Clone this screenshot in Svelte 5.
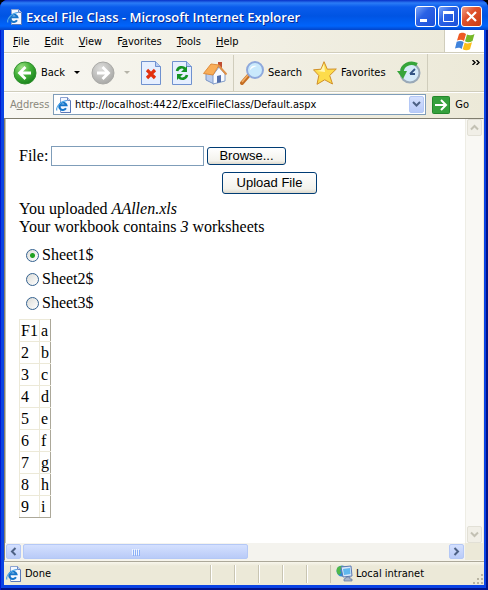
<script lang="ts">
	const menus = [
		{ pre: '', key: 'F', post: 'ile' },
		{ pre: '', key: 'E', post: 'dit' },
		{ pre: '', key: 'V', post: 'iew' },
		{ pre: 'F', key: 'a', post: 'vorites' },
		{ pre: '', key: 'T', post: 'ools' },
		{ pre: '', key: 'H', post: 'elp' }
	];

	const sheets = ['Sheet1$', 'Sheet2$', 'Sheet3$'];

	const rows = [
		['F1', 'a'],
		['2', 'b'],
		['3', 'c'],
		['4', 'd'],
		['5', 'e'],
		['6', 'f'],
		['7', 'g'],
		['8', 'h'],
		['9', 'i']
	];

	let selected = $state('Sheet1$');
	let address = $state('http://localhost:4422/ExcelFileClass/Default.aspx');
	let fileName = $state('');
</script>

{#snippet pageIcon()}
	<svg class="page-icon" width="16" height="16" viewBox="0 0 16 16" aria-hidden="true">
		<path d="M4.5 .5h7l3 3v12h-10z" fill="#f4f7ff" stroke="#8ba3d2" />
		<path d="M11.5 .5v3h3" fill="#c5d3ef" stroke="#6d87c0" />
		<path d="M14.5 4v11.500H5" fill="none" stroke="#5a78b8" />
		<path d="M10 11.300a3.700 3.700 0 1 1 .5-3H4" fill="none" stroke="#1674c9" stroke-width="2" />
		<path d="M1 13.500C-1 10 6 3.500 11 3.500" fill="none" stroke="#51a7e8" stroke-width="1.200" />
	</svg>
{/snippet}

{#snippet chevron(d: string)}
	<svg width="9" height="9" viewBox="0 0 9 9" aria-hidden="true">
		<path {d} fill="none" stroke="currentColor" stroke-width="2" />
	</svg>
{/snippet}

<div class="desktop">
	<div class="window">
		<header class="title-bar">
			{@render pageIcon()}
			<h1>Excel File Class - Microsoft Internet Explorer</h1>
			<div class="window-buttons">
				<button aria-label="Minimize">
					<svg width="19" height="19" viewBox="0 0 19 19"><path d="M4 12h7v3H4z" fill="#fff" /></svg>
				</button>
				<button aria-label="Maximize">
					<svg width="19" height="19" viewBox="0 0 19 19">
						<path d="M4.5 5v9.5h10V5" fill="none" stroke="#fff" />
						<path d="M4 4h11v3H4z" fill="#fff" />
					</svg>
				</button>
				<button class="close" aria-label="Close">
					<svg width="19" height="19" viewBox="0 0 19 19">
						<path d="M5 5l9 9M14 5l-9 9" stroke="#fff" stroke-width="2.2" />
					</svg>
				</button>
			</div>
		</header>

		<div class="menu-bar">
			<nav>
				{#each menus as item}
					<button>{item.pre}<u>{item.key}</u>{item.post}</button>
				{/each}
			</nav>
			<div class="flag">
				<svg width="20" height="19" viewBox="0 0 20 19" aria-hidden="true">
					<path d="M4 2c3-2 5-1 7 0L9 9C7 7.500 5 7.500 2 8.500z" fill="#ee5a24" />
					<path d="M12 2.500c2 1 5 1 7.500-.5l-2 7c-3 1.500-5 1.500-7.500.3z" fill="#76b82a" />
					<path d="M1.700 9.700c3-1 5-.8 7 .4l-2 7C5 15.500 3 15.500 0 16.500z" fill="#3f83dc" />
					<path d="M9.700 10.500c2 1.300 4.500 1.200 7.300-.2l-2 7c-2.500 1.300-5 1.200-7.300 0z" fill="#fbbe1a" />
				</svg>
			</div>
		</div>

		<div class="toolbar">
			<div class="tools">
				<button class="tool">
					<svg width="24" height="24" viewBox="0 0 24 24" aria-hidden="true">
						<defs>
							<radialGradient id="green-ball" cx=".35" cy=".25" r=".8">
								<stop offset="0" stop-color="#9be083" />
								<stop offset=".5" stop-color="#43b138" />
								<stop offset="1" stop-color="#17801b" />
							</radialGradient>
							<radialGradient id="gray-ball" cx=".4" cy=".3" r=".8">
								<stop offset="0" stop-color="#dededc" />
								<stop offset="1" stop-color="#a2a2a0" />
							</radialGradient>
						</defs>
						<circle cx="12" cy="12" r="11" fill="url(#green-ball)" stroke="#2f8f2d" />
						<path d="M12.500 6l-6 6 6 6M7 12h11" fill="none" stroke="#fff" stroke-width="2.800" />
					</svg>
					<span>Back</span>
					<i class="arrow"></i>
				</button>
				<button class="tool forward" aria-label="Forward">
					<svg width="24" height="24" viewBox="0 0 24 24" aria-hidden="true">
						<circle cx="12" cy="12" r="11" fill="url(#gray-ball)" stroke="#a9a9a6" />
						<path d="M11.500 6l6 6-6 6M17 12H6" fill="none" stroke="#fff" stroke-width="2.800" />
					</svg>
					<i class="arrow"></i>
				</button>
				<button class="tool" aria-label="Stop">
					<svg width="20" height="24" viewBox="0 0 20 24" aria-hidden="true">
						<path d="M.5 .5h14l5 5v18H.5z" fill="#e6efff" stroke="#6f91cf" />
						<path d="M14.500 .5v5h5" fill="#b9cdf2" stroke="#6f91cf" />
						<path d="M6 9l8 8M14 9l-8 8" stroke="#e2300f" stroke-width="3.200" />
					</svg>
				</button>
				<button class="tool" aria-label="Refresh">
					<svg width="20" height="24" viewBox="0 0 20 24" aria-hidden="true">
						<path d="M.5 .5h14l5 5v18H.5z" fill="#e6efff" stroke="#6f91cf" />
						<path d="M14.500 .5v5h5" fill="#b9cdf2" stroke="#6f91cf" />
						<path d="M5 10c1-4 6-5 8-2" fill="none" stroke="#159425" stroke-width="2.600" />
						<path d="M15 5v6H9z" fill="#159425" />
						<path d="M15 14c-1 4-6 5-8 2" fill="none" stroke="#159425" stroke-width="2.600" />
						<path d="M5 19v-6h6z" fill="#159425" />
					</svg>
				</button>
				<button class="tool" aria-label="Home">
					<svg width="24" height="24" viewBox="0 0 24 24" aria-hidden="true">
						<path d="M15 1h4v8h-4z" fill="#bf4f32" />
						<path d="M3 12l8 2v9l-8-4z" fill="#bacced" stroke="#7894c4" />
						<path d="M10 14l6-8 6 7v7l-12 3z" fill="#f8fbff" stroke="#829cc8" />
						<path d="M14 15l4-1v7l-4 1z" fill="#5571ad" />
						<path d="M.5 12.500L8 3l8 1-6 10z" fill="#f9ae58" stroke="#de8c3c" />
						<path d="M15.500 4.500l8 9" stroke="#e09248" stroke-width="2" />
					</svg>
				</button>
				<span class="divider"></span>
				<button class="tool">
					<svg width="24" height="24" viewBox="0 0 24 24" aria-hidden="true">
						<path d="M2 22l7-8" stroke="#c46e24" stroke-width="4" stroke-linecap="round" />
						<path d="M2 21l6-7" stroke="#f4af63" stroke-width="1.500" />
						<circle cx="15" cy="9" r="8" fill="#c9e9fc" stroke="#8fa9dc" stroke-width="2" />
						<path d="M10 9c0-4 4-5 7-4-3 1-5 2-7 4z" fill="#fff" />
					</svg>
					<span>Search</span>
				</button>
				<button class="tool">
					<svg width="24" height="24" viewBox="0 0 24 24" aria-hidden="true">
						<path
							d="M11 .7l3.300 7.500 9-.2-6.600 6.500 2.800 8.500-7.800-4.200L4 23.300l1.800-8.800L.5 8.800l7.500-.6z"
							fill="#fddc4b"
							stroke="#d08f28"
							stroke-linejoin="round"
						/>
						<path d="M11 3l1 8-8-1 4-1z" fill="#fff6b4" />
					</svg>
					<span>Favorites</span>
				</button>
				<button class="tool" aria-label="History">
					<svg width="24" height="24" viewBox="0 0 24 24" aria-hidden="true">
						<circle cx="13" cy="12" r="9.500" fill="#d5eaf8" stroke="#9aa9b8" stroke-width="2" />
						<path d="M13 13l5-5M13 13h5" stroke="#345584" stroke-width="1.800" />
						<path d="M20 3.500C13 0 5 4 5 11" fill="none" stroke="#36a53a" stroke-width="3.500" />
						<path d="M0 10h10l-4 8z" fill="#36a53a" />
					</svg>
				</button>
			</div>
			<button class="more" aria-label="More tools">
				<svg width="8" height="5" viewBox="0 0 8 5">
					<path d="M.5 0L3 2.500.500 5M4.500 0L7 2.500 4.500 5" fill="none" stroke="#000" stroke-width="1.400" />
				</svg>
			</button>
		</div>

		<div class="address-bar">
			<label for="address">A<u>d</u>dress</label>
			<div class="address-box">
				{@render pageIcon()}
				<input id="address" type="text" bind:value={address} />
				<button class="xp" aria-label="Show addresses">{@render chevron('M1 2l3.500 3.500L8 2')}</button>
			</div>
			<button class="go">
				<svg width="18" height="18" viewBox="0 0 18 18" aria-hidden="true">
					<rect x=".5" y=".5" width="17" height="17" rx="1" fill="#35a03c" stroke="#23862b" />
					<path d="M9 4l5 5-5 5M14 9H3" fill="none" stroke="#fff" stroke-width="2" />
				</svg>
				<span>Go</span>
			</button>
		</div>

		<div class="viewport">
			<main>
				<form onsubmit={(e) => e.preventDefault()}>
					<div class="file-row">
						<label for="file">File:</label>
						<input id="file" type="text" bind:value={fileName} />
						<button type="button">Browse...</button>
					</div>
					<button class="upload">Upload File</button>
					<p>You uploaded <em>AAllen.xls</em></p>
					<p>Your workbook contains <em>3</em> worksheets</p>
					<div class="sheets">
						{#each sheets as sheet}
							<label>
								<input type="radio" name="sheet" value={sheet} bind:group={selected} />
								{sheet}
							</label>
						{/each}
					</div>
				</form>
				<table>
					<tbody>
						{#each rows as row}
							<tr>
								{#each row as cell}
									<td>{cell}</td>
								{/each}
							</tr>
						{/each}
					</tbody>
				</table>
			</main>
			<div class="scroll-y">
				<button class="xp off" aria-label="Scroll up">{@render chevron('M1 6.500L4.500 3 8 6.500')}</button>
				<button class="xp off" aria-label="Scroll down">{@render chevron('M1 2.500L4.500 6 8 2.500')}</button>
			</div>
			<div class="scroll-x">
				<button class="xp" aria-label="Scroll left">{@render chevron('M6.500 1L3 4.500 6.500 8')}</button>
				<div class="track">
					<div class="xp thumb"><i></i><i></i><i></i><i></i></div>
				</div>
				<button class="xp" aria-label="Scroll right">{@render chevron('M2.500 1L6 4.500 2.500 8')}</button>
			</div>
			<div class="corner"></div>
		</div>

		<footer class="status-bar">
			<div class="status">
				{@render pageIcon()}
				<span>Done</span>
			</div>
			<span class="pane"></span>
			<span class="pane"></span>
			<span class="pane"></span>
			<span class="pane"></span>
			<span class="pane"></span>
			<div class="zone">
				<svg width="17" height="17" viewBox="0 0 17 17" aria-hidden="true">
					<circle cx="6" cy="6" r="5.500" fill="#2e8ad2" />
					<path d="M2 2c3-2 5-1 5 1L4 5l1 3-2 2C0 8 0 4 2 2z" fill="#4fb947" />
					<path d="M5 2l10-1 1 10-9 1z" fill="#d9e8fa" stroke="#5c79b2" />
					<path d="M7 4l7-1 .5 6-6.500 1z" fill="#61b7ee" />
					<path d="M10 12h4v2h2v2H8v-2l2-1z" fill="#a6b4cc" stroke="#62789e" stroke-width=".7" />
				</svg>
				<span>Local intranet</span>
			</div>
			<svg class="grip" width="12" height="12" viewBox="0 0 12 12" aria-hidden="true">
				<path d="M9 1h2v2H9zM5 5h2v2H5zM9 5h2v2H9zM1 9h2v2H1zM5 9h2v2H5zM9 9h2v2H9z" fill="#b8b4a2" />
			</svg>
		</footer>
	</div>
</div>

<style>
	:global(body) {
		margin: 0;
	}

	.desktop {
		--face: #ece9d8;
		--line: #d0cdbc;
		box-sizing: border-box;
		min-height: 100vh;
		display: flex;
		background: linear-gradient(#000 20px, #0831d9 20px);
		font: 11px/16px 'DejaVu Sans Condensed', Tahoma, sans-serif;
		color: #000;
	}

	.window {
		flex: 1;
		min-width: 0;
		display: flex;
		flex-direction: column;
		box-sizing: border-box;
		padding: 0 4px 5px 4px;
		border-radius: 8px 8px 0 0;
		background: #0a43e4;
		box-shadow: inset 1px 0 #0019cf, inset -2px -2px #00138c;
		overflow: hidden;
	}

	button {
		font: inherit;
		color: inherit;
		padding: 0;
		border: 0;
		background: none;
	}

	svg {
		display: block;
		flex: none;
	}

	.title-bar {
		display: flex;
		align-items: center;
		height: 30px;
		margin: 0 -4px;
		padding: 3px 6px 0 7px;
		box-sizing: border-box;
		background: linear-gradient(#0831c8 0, #2b7cf6 3px, #0a5cec 7px, #0054e3 16px, #0064fb 26px, #0344c8 30px);
	}
	.title-bar h1 {
		flex: 1;
		margin: 0 0 0 3px;
		font: 600 13px/18px 'Trebuchet MS', 'Open Sans', sans-serif;
		color: #fff;
		text-shadow: 1px 1px #0a2a94;
		white-space: nowrap;
	}
	.window-buttons {
		display: flex;
		gap: 2px;
	}
	.window-buttons button {
		border: 1px solid #fff;
		border-radius: 3px;
		background: linear-gradient(135deg, #7ba5f8, #2a62e6 40%, #1c50d8);
	}
	.window-buttons .close {
		background: linear-gradient(135deg, #f0a088, #e0512c 40%, #c83c12);
	}

	.menu-bar {
		display: flex;
		height: 22px;
		background: linear-gradient(90deg, #f8f7f2, var(--face));
		border-bottom: 1px solid var(--line);
	}
	.menu-bar nav {
		flex: 1;
		display: flex;
		align-items: center;
		gap: 15px;
		padding: 2px 0 0 9px;
	}
	.flag {
		display: flex;
		align-items: center;
		justify-content: center;
		width: 39px;
		background: #fff;
		border-left: 1px solid var(--line);
	}

	.toolbar {
		display: flex;
		height: 39px;
		background: linear-gradient(90deg, #f8f7f2, var(--face));
		border-top: 1px solid #fff;
		border-bottom: 1px solid var(--line);
		box-sizing: border-box;
	}
	.tools {
		flex: 1;
		display: flex;
		align-items: center;
		gap: 11px;
		padding-left: 9px;
	}
	.tool {
		display: flex;
		align-items: center;
		gap: 4px;
	}
	.arrow {
		margin-left: 5px;
		border: 3px solid transparent;
		border-top-color: #000;
		border-bottom: 0;
	}
	.forward .arrow {
		border-top-color: #b5b3a8;
	}
	.divider {
		width: 1px;
		height: 36px;
		margin: 0 -5px;
		background: var(--line);
	}
	.more {
		align-self: stretch;
		display: flex;
		width: 57px;
		justify-content: flex-end;
		padding: 6px 4px 0 0;
		border-left: 1px solid var(--line);
	}

	.address-bar {
		display: flex;
		align-items: center;
		height: 26px;
		padding: 0 15px 2px 6px;
		box-sizing: border-box;
		background: linear-gradient(90deg, #f8f7f2, var(--face));
		border-top: 1px solid #fff;
	}
	.address-bar label {
		width: 43px;
		color: #8a887c;
	}
	.address-box {
		flex: 1;
		display: flex;
		align-items: center;
		height: 21px;
		box-sizing: border-box;
		padding: 1px 1px 1px 2px;
		border: 1px solid #7f9db9;
		background: #fff;
	}
	.address-box input {
		flex: 1;
		min-width: 0;
		padding: 0 3px;
		border: 0;
		outline: 0;
		background: none;
		font: inherit;
	}
	.go {
		display: flex;
		align-items: center;
		gap: 5px;
		margin-left: 6px;
	}

	.xp {
		display: flex;
		align-items: center;
		justify-content: center;
		box-sizing: border-box;
		width: 15px;
		height: 17px;
		border: 1px solid #b4c8f6;
		border-radius: 2px;
		background: linear-gradient(#d4e0fe, #b9cbf8);
		color: #4d6185;
	}
	.xp.off {
		border-color: #e2e0d6;
		background: #f1efe7;
		color: #c3c1b4;
	}

	.viewport {
		flex: 1;
		display: grid;
		grid-template-columns: 1fr 18px;
		grid-template-rows: 1fr 17px;
		border: 1px solid #807d6e;
		border-right-color: var(--face);
		border-bottom-color: #f6f4ec;
		box-shadow: inset 1px 0 #c4c1b2;
		background: #fff;
	}

	main {
		padding: 27px 14px 16px;
		font: 16px/18px 'Times New Roman', 'Liberation Serif', serif;
	}
	.file-row {
		display: flex;
		align-items: center;
		gap: 3px;
	}
	.file-row label {
		width: 29px;
	}
	.file-row input {
		width: 153px;
		height: 20px;
		box-sizing: border-box;
		border: 1px solid #7f9db9;
	}
	form button {
		box-sizing: border-box;
		width: 79px;
		height: 18px;
		border: 1px solid #003c74;
		border-radius: 3px;
		background: linear-gradient(#fff, #f3f2ec 80%, #dcd8cc);
		font: 13px/16px Arial, 'Liberation Sans', sans-serif;
	}
	form .upload {
		display: block;
		width: 95px;
		height: 22px;
		margin: 6px 0 6px 203px;
	}
	p {
		margin: 0;
	}
	.sheets {
		display: grid;
		padding: 7px 7px 4px;
	}
	.sheets label {
		display: flex;
		align-items: center;
		gap: 3px;
		height: 24px;
	}
	.sheets input {
		appearance: none;
		width: 13px;
		height: 13px;
		margin: 0;
		border: 1px solid #33618f;
		border-radius: 50%;
		background: linear-gradient(135deg, #dcdcd7, #fff);
	}
	.sheets input:checked {
		background: radial-gradient(circle, #21a121 2px, transparent 3px), linear-gradient(135deg, #dcdcd7, #fff);
	}

	table {
		border-collapse: collapse;
		border: 1px solid var(--face);
		border-right-color: #aca899;
		border-bottom-color: #aca899;
	}
	td {
		height: 21px;
		padding: 0 1px;
		border: 1px solid var(--face);
	}
	td:last-child {
		border-right-color: #aca899;
	}
	tr:last-child td {
		border-bottom-color: #aca899;
	}

	.scroll-y {
		display: flex;
		flex-direction: column;
		justify-content: space-between;
		align-items: center;
		background: #f9f8f4;
		border-left: 1px solid #eeede5;
	}
	.scroll-x {
		display: flex;
		align-items: center;
		gap: 2px;
		padding: 0 1px;
		background: #f4f3ee;
	}
	.scroll-x .xp {
		height: 15px;
	}
	.track {
		flex: 1;
	}
	.scroll-x .thumb {
		width: 53%;
		gap: 1px;
	}
	.thumb i {
		width: 1px;
		height: 6px;
		background: #eef4fe;
		box-shadow: 1px 1px #8cb0f8;
	}
	.corner {
		background: var(--face);
	}

	.status-bar {
		display: flex;
		align-items: center;
		height: 23px;
		border-top: 1px solid #aca899;
		background: linear-gradient(#f8f6ec, var(--face) 4px);
	}
	.status,
	.zone {
		display: flex;
		align-items: center;
		gap: 3px;
		padding-left: 2px;
	}
	.status {
		flex: 1;
	}
	.pane {
		width: 24px;
		height: 18px;
		box-sizing: border-box;
		border-left: 1px solid #c9c5b2;
		box-shadow: inset 1px 0 #fff;
	}
	.zone {
		width: 136px;
		height: 18px;
		padding-left: 5px;
		border-left: 1px solid #c9c5b2;
	}
	.grip {
		align-self: flex-end;
	}
</style>
